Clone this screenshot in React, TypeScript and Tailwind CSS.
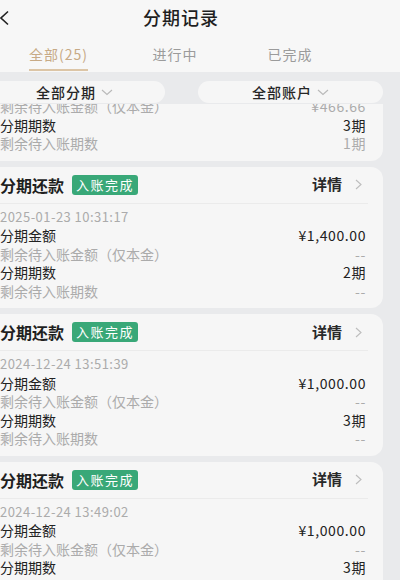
import type { ReactNode } from "react"

type Record = {
  time: string
  amount: string
  remainAmount: string
  periods: string
  remainPeriods: string
}

const records: Record[] = [
  { time: "2025-02-11 09:12:40", amount: "¥1,400.00", remainAmount: "¥466.66", periods: "3期", remainPeriods: "1期" },
  { time: "2025-01-23 10:31:17", amount: "¥1,400.00", remainAmount: "--", periods: "2期", remainPeriods: "--" },
  { time: "2024-12-24 13:51:39", amount: "¥1,000.00", remainAmount: "--", periods: "3期", remainPeriods: "--" },
  { time: "2024-12-24 13:49:02", amount: "¥1,000.00", remainAmount: "--", periods: "3期", remainPeriods: "--" },
]

function DownChevron(): ReactNode {
  return (
    <svg width="12" height="7" viewBox="0 0 12 7" className="ml-[5px] mt-[1px]">
      <polyline points="1,1 6,5.5 11,1" fill="none" stroke="#b9b9b9" strokeWidth="1.1" />
    </svg>
  )
}

function Row({ label, value, muted }: { label: string; value: string; muted?: boolean }): ReactNode {
  return (
    <div className={`flex justify-between ${muted ? "text-[#ababab]" : "text-[#222]"}`}>
      <span>{label}</span>
      <span className="tracking-[0.6px]">{value}</span>
    </div>
  )
}

function RecordCard({ record, first }: { record: Record; first?: boolean }): ReactNode {
  return (
    <div className={`shrink-0 rounded-[12px] bg-[#f6f6f6] ${first ? "-mt-[85px]" : ""}`}>
      <div className="flex h-[36px] items-center pl-[14px] pr-[21px]">
        <span className="text-[16px] font-bold text-[#1f1f1f]">分期还款</span>
        <span className="ml-[8px] flex h-[20px] items-center rounded-[3px] bg-[#39a878] px-[4px] text-[13px] tracking-[1.5px] text-white">入账完成</span>
        <span className="ml-auto text-[15px] font-bold text-[#2a2a2a]">详情</span>
        <svg width="7" height="11" viewBox="0 0 7 11" className="ml-[13px]">
          <polyline points="1,1 6,5.5 1,10" fill="none" stroke="#bdbdbd" strokeWidth="1.1" />
        </svg>
      </div>
      <div className="ml-[14px] mr-[15px] h-px bg-[#ebebeb]" />
      <div className="pb-[8px] pl-[14px] pr-[17px] pt-[4px] text-[14px] leading-[18.5px]">
        <div className="text-[13px] tracking-[0.45px] text-[#ababab]">{record.time}</div>
        <Row label="分期金额" value={record.amount} />
        <Row label="剩余待入账金额（仅本金）" value={record.remainAmount} muted />
        <Row label="分期期数" value={record.periods} />
        <Row label="剩余待入账期数" value={record.remainPeriods} muted />
      </div>
    </div>
  )
}

export default function App(): ReactNode {
  return (
    <div
      className="h-[580px] w-[400px] overflow-hidden bg-[#e9eaec]"
      style={{ fontFamily: '"Noto Sans CJK SC", "Noto Sans", sans-serif' }}
    >
      <div className="bg-[#f7f7f7]">
        <div className="flex h-[35px] items-center">
          <svg width="10" height="16" viewBox="0 0 10 16" className="shrink-0">
            <polyline points="8,1.5 1,8 8,14.5" fill="none" stroke="#222" strokeWidth="1.6" />
          </svg>
          <div className="flex-1 pr-[48px] text-center text-[18px] font-medium tracking-[1px] text-[#1f1f1f]">分期记录</div>
        </div>
        <div className="flex h-[37px] items-start pl-[1px] text-[14px] leading-[20px] tracking-[1px]">
          <div className="flex w-[115px] justify-center">
            <div className="flex flex-col items-center pt-[9px]">
              <span className="text-[#c7aa86]">全部(25)</span>
              <div className="mt-[5px] h-[2px] w-full bg-[#dcc5a6]" />
            </div>
          </div>
          <div className="w-[118px] pt-[9px] text-center text-[#9b9b9b]">进行中</div>
          <div className="w-[112px] pt-[9px] text-center text-[#9b9b9b]">已完成</div>
        </div>
      </div>

      <div className="-ml-[22px] flex h-[32px] gap-[33px] pt-[9px]">
        <div className="flex h-[22px] w-[187px] shrink-0 items-center justify-center rounded-full bg-[#f6f6f6] pl-[6px] text-[14px] font-medium leading-[20px] tracking-[1px] text-[#262626]">
          全部分期
          <DownChevron />
        </div>
        <div className="flex h-[22px] w-[185px] shrink-0 items-center justify-center rounded-full bg-[#f6f6f6] text-[14px] font-medium leading-[20px] tracking-[1px] text-[#262626]">
          全部账户
          <DownChevron />
        </div>
      </div>

      <div className="-ml-[14px] flex h-[476px] w-[397px] flex-col gap-[6px] overflow-hidden">
        {records.map((r, i) => (
          <RecordCard key={r.time} record={r} first={i === 0} />
        ))}
      </div>
    </div>
  )
}
